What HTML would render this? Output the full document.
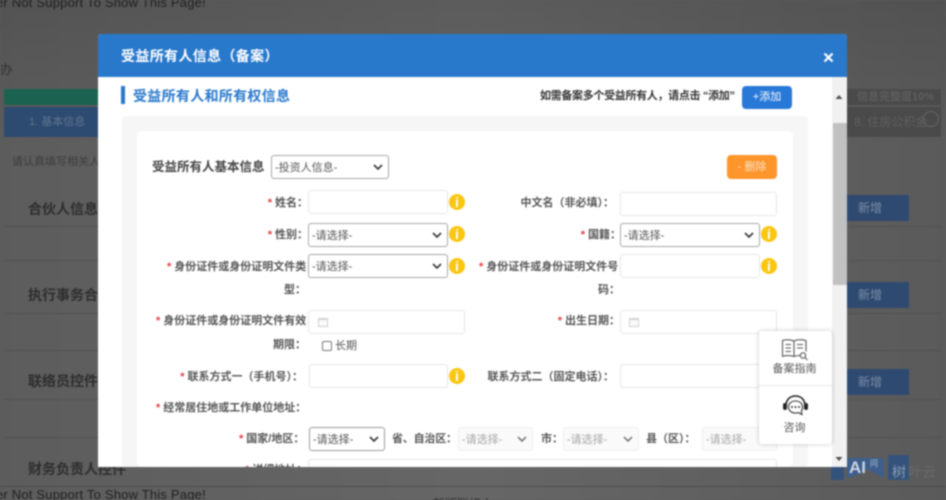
<!DOCTYPE html>
<html lang="zh-CN"><head><meta charset="utf-8"><title>受益所有人信息</title>
<style>
*{box-sizing:border-box}
html,body{margin:0;padding:0;width:946px;height:500px;overflow:hidden}
body{position:relative;font-family:"Liberation Sans","Noto Sans CJK SC",sans-serif;background:#5e5e5e}
#wrap{position:absolute;left:0;top:0;width:946px;height:500px;filter:blur(.7px);overflow:hidden;background:linear-gradient(180deg,rgba(0,0,0,.1) 0,rgba(0,0,0,0) 30%),linear-gradient(90deg,#5c5c5c 0,#666 50%,#5a5a5a 100%)}
.a{position:absolute;white-space:nowrap}
.bg{color:#2c2c2c}
.h{font-weight:700;font-size:14px;color:#2e2e2e;line-height:20px}
.line{position:absolute;height:1px;background:#525252}
.new{position:absolute;left:847px;width:62px;height:26px;background:#2f4a70;color:#7b8ea8;font-size:12px;line-height:26px;padding-left:11px}
#modal{position:absolute;left:98px;top:34px;width:749px;height:433px;background:#fff;border-radius:3px 3px 0 0;overflow:hidden}
#head{position:absolute;left:0;top:0;width:749px;height:43px;background:#2878cc;color:#fff;font-size:14px;font-weight:700;line-height:45px;padding-left:23px;letter-spacing:.35px}
.lb{position:absolute;font-size:11px;font-weight:700;color:#555;line-height:17px;white-space:nowrap;text-align:right}
.lb i{font-style:normal;color:#e23a3a;margin-right:3px}
.ip{position:absolute;height:24px;background:#fff;border:1px solid #e6e6e6;border-radius:3px}
.sel{position:absolute;height:24px;background:#fff;border:1px solid #a5a5a5;border-radius:3px;font-size:11px;color:#555;line-height:24px;padding-left:3px;white-space:nowrap}
.sel svg,.dis svg{position:absolute;right:5px;top:8px}
.dis{position:absolute;height:24px;background:#fafafa;border:1px solid #eee;border-radius:3px;font-size:11px;color:#a6a6a6;line-height:24px;padding-left:3px;white-space:nowrap}
.inf{position:absolute;width:16px;height:16px;border-radius:50%;background:#fbc60f;color:#fff;font:700 14px/16px "Liberation Sans",sans-serif;text-align:center}
.cal{position:absolute;width:10px;height:9px;border:1px solid #d0d0d0;border-top-width:2px;background:#fafafa}
</style></head>
<body><div id="wrap">
<div class="a bg" style="left:-4px;top:-5px;font-size:13px;color:#1f1f1f;letter-spacing:.2px">er Not Support To Show This Page!</div>
<div class="a bg" style="left:0;top:59px;font-size:13px;color:#333">办</div>
<div class="a" style="left:4px;top:89px;width:94px;height:16px;background:#1c6250"></div>
<div class="a" style="left:4px;top:107px;width:94px;height:30px;background:#2d4a70;color:#5d7590;font-size:11px;line-height:30px;padding-left:25px">1. 基本信息</div>
<div class="a" style="left:12px;top:153px;font-size:11px;color:#3d3d3d">请认真填写相关人</div>
<div class="a h" style="left:28px;top:199px">合伙人信息</div>
<div class="a h" style="left:28px;top:285px">执行事务合</div>
<div class="a h" style="left:28px;top:371px">联络员控件</div>
<div class="a h" style="left:28px;top:459px">财务负责人控件</div>
<div class="line" style="left:4px;top:226px;width:94px"></div><div class="line" style="left:4px;top:260px;width:94px"></div>
<div class="line" style="left:4px;top:313px;width:94px"></div><div class="line" style="left:4px;top:350px;width:94px"></div>
<div class="line" style="left:4px;top:399px;width:94px"></div><div class="line" style="left:4px;top:437px;width:94px"></div>
<div class="line" style="left:847px;top:226px;width:95px"></div><div class="line" style="left:847px;top:260px;width:95px"></div>
<div class="line" style="left:847px;top:313px;width:95px"></div><div class="line" style="left:847px;top:350px;width:95px"></div>
<div class="line" style="left:847px;top:399px;width:95px"></div><div class="line" style="left:847px;top:437px;width:95px"></div>
<div class="line" style="left:0;top:486px;width:946px;background:#4d4d4d"></div>
<div class="a" style="left:847px;top:89px;width:94px;height:16px;background:#4a4a4a;color:#5e5e5e;font-size:11px;font-weight:700;line-height:16px;padding-left:10px">信息完整度10%</div>
<div class="a" style="left:847px;top:107px;width:94px;height:30px;background:#4a4a4a;color:#5f5f5f;font-size:12px;line-height:30px;padding-left:7px">8. 住房公积金</div>
<div class="a" style="left:923px;top:111px;width:16px;height:16px;border:1px solid #666;border-radius:50%"></div>
<div class="new" style="top:195px">新增</div>
<div class="new" style="top:282px">新增</div>
<div class="new" style="top:369px">新增</div>
<div class="a" style="left:831px;top:467px;width:13px;height:13px;background:#34537c"></div>
<div class="a" style="left:847px;top:458px;width:37px;height:20px;background:#3e5f8c;clip-path:polygon(0 0,100% 0,100% 100%,72% 72%,55% 55%,35% 80%,0 100%)"></div>
<div class="a" style="left:849px;top:458px;color:#ccd5e1;font:700 17px/20px 'Liberation Sans',sans-serif">AI</div>
<div class="a" style="left:870px;top:459px;color:#b9c5d5;font-size:8px;line-height:9px">问</div>
<div class="a" style="left:888px;top:455px;width:21px;height:25px;background:#34537c"></div>
<div class="a" style="left:892px;top:463px;font-size:14px;line-height:18px;color:#8a9bb0">树</div>
<div class="a" style="left:908px;top:463px;font-size:14px;line-height:18px;color:#6a6a6a">叶云</div>
<div class="a" style="left:433px;top:497px;font-size:12px;color:#2c2c2c;line-height:14px">新版联络人</div>

<div id="modal">
 <div id="head">受益所有人信息（备案）</div>
 <svg style="position:absolute;left:725px;top:18px" width="11" height="11" viewBox="0 0 11 11"><path d="M1.5 1.5l8 8M9.5 1.5l-8 8" stroke="#fff" stroke-width="2.2"/></svg>
 <div style="position:absolute;left:734px;top:43px;width:15px;height:390px;background:#f1f1f1"></div>
 <div style="position:absolute;left:735px;top:89px;width:14px;height:162px;background:#c1c1c1"></div>
 <svg style="position:absolute;left:736px;top:60px" width="10" height="6"><path d="M1.5 5h7L5 1z" fill="#505050"/></svg>
 <svg style="position:absolute;left:736px;top:422px" width="10" height="6"><path d="M1.5 1h7L5 5z" fill="#505050"/></svg>

 <div style="position:absolute;left:23px;top:52px;width:4px;height:18px;background:#2878cc"></div>
 <div class="a" style="left:35px;top:52px;font-size:14px;font-weight:700;color:#2878cc;line-height:20px;letter-spacing:.3px">受益所有人和所有权信息</div>
 <div class="a" style="left:442px;top:54px;font-size:11px;font-weight:700;color:#333;line-height:16px;letter-spacing:-.32px">如需备案多个受益所有人，请点击 “添加”</div>
 <div class="a" style="left:644px;top:52px;width:50px;height:23px;background:#2878d8;border-radius:4px;color:#fff;font-size:11px;line-height:23px;text-align:center">+添加</div>

 <div style="position:absolute;left:24px;top:82px;width:686px;height:351px;background:#f6f6f6;border-radius:4px"></div>
 <div style="position:absolute;left:39px;top:97px;width:656px;height:336px;background:#fff;border-radius:5px"></div>

 <div class="a" style="left:54px;top:124px;font-size:12.5px;font-weight:700;color:#444;line-height:18px">受益所有人基本信息</div>
 <div class="sel" style="left:173px;top:121px;width:118px">-投资人信息-<svg width="10" height="6"><path d="M1 1l4 4 4-4" fill="none" stroke="#333" stroke-width="1.6"/></svg></div>
 <div class="a" style="left:629px;top:121px;width:50px;height:24px;background:#fd952a;border-radius:4px;color:#fbe3c8;font-size:11px;line-height:24px;text-align:center">- 删除</div>

 <div class="lb" style="right:539px;top:161px"><i>*</i>姓名：</div>
 <div class="ip" style="left:210px;top:156px;width:140px"></div><div class="inf" style="left:351px;top:160px">i</div>
 <div class="lb" style="right:233px;top:161px">中文名（非必填）：</div>
 <div class="ip" style="left:522px;top:158px;width:157px"></div>

 <div class="lb" style="right:539px;top:193px"><i>*</i>性别：</div>
 <div class="sel" style="left:210px;top:189px;width:140px">-请选择-<svg width="10" height="6"><path d="M1 1l4 4 4-4" fill="none" stroke="#333" stroke-width="1.6"/></svg></div><div class="inf" style="left:351px;top:192px">i</div>
 <div class="lb" style="right:226px;top:193px"><i>*</i>国籍：</div>
 <div class="sel" style="left:522px;top:189px;width:140px">-请选择-<svg width="10" height="6"><path d="M1 1l4 4 4-4" fill="none" stroke="#333" stroke-width="1.6"/></svg></div><div class="inf" style="left:663px;top:192px">i</div>

 <div class="lb" style="left:69px;top:225px"><i>*</i>身份证件或身份证明文件类</div>
 <div class="lb" style="right:541px;top:248px">型：</div>
 <div class="sel" style="left:210px;top:220px;width:140px">-请选择-<svg width="10" height="6"><path d="M1 1l4 4 4-4" fill="none" stroke="#333" stroke-width="1.6"/></svg></div><div class="inf" style="left:351px;top:224px">i</div>
 <div class="lb" style="left:381px;top:225px"><i>*</i>身份证件或身份证明文件号</div>
 <div class="lb" style="right:227px;top:248px">码：</div>
 <div class="ip" style="left:522px;top:220px;width:140px"></div><div class="inf" style="left:663px;top:224px">i</div>

 <div class="lb" style="left:58px;top:279px"><i>*</i>身份证件或身份证明文件有效</div>
 <div class="lb" style="right:541px;top:303px">期限：</div>
 <div class="ip" style="left:210px;top:276px;width:157px"></div><div class="cal" style="left:220px;top:284px"></div>
 <div class="a" style="left:224px;top:307px;width:10px;height:10px;border:1px solid #777;border-radius:2px;background:#fff"></div>
 <div class="a" style="left:237px;top:304px;font-size:11px;color:#555;line-height:16px">长期</div>
 <div class="lb" style="right:227px;top:279px"><i>*</i>出生日期：</div>
 <div class="ip" style="left:522px;top:276px;width:157px"></div><div class="cal" style="left:531px;top:284px"></div>

 <div class="lb" style="right:544px;top:335px"><i>*</i>联系方式一（手机号）：</div>
 <div class="ip" style="left:211px;top:330px;width:139px"></div><div class="inf" style="left:351px;top:334px">i</div>
 <div class="lb" style="right:233px;top:335px">联系方式二（固定电话）：</div>
 <div class="ip" style="left:522px;top:330px;width:157px"></div>

 <div class="lb" style="left:58px;top:366px"><i>*</i>经常居住地或工作单位地址：</div>

 <div class="lb" style="left:141px;top:397px"><i>*</i>国家/地区：</div>
 <div class="sel" style="left:211px;top:393px;width:76px;border-color:#999">-请选择-<svg width="10" height="6"><path d="M1 1l4 4 4-4" fill="none" stroke="#333" stroke-width="1.6"/></svg></div>
 <div class="lb" style="left:294px;top:397px;letter-spacing:-.2px">省、自治区：</div>
 <div class="dis" style="left:360px;top:393px;width:75px">-请选择-<svg width="10" height="6"><path d="M1 1l4 4 4-4" fill="none" stroke="#666" stroke-width="1.4"/></svg></div>
 <div class="lb" style="left:443px;top:397px">市：</div>
 <div class="dis" style="left:465px;top:393px;width:76px">-请选择-<svg width="10" height="6"><path d="M1 1l4 4 4-4" fill="none" stroke="#666" stroke-width="1.4"/></svg></div>
 <div class="lb" style="left:548px;top:397px">县（区）：</div>
 <div class="dis" style="left:604px;top:393px;width:75px">-请选择-</div>
 <div class="lb" style="left:147px;top:428px"><i>*</i>详细地址：</div>
 <div class="ip" style="left:210px;top:425px;width:469px"></div>
</div>

<div class="a" style="left:759px;top:331px;width:73px;height:113px;background:#fff;border-radius:3px;box-shadow:0 0 5px rgba(0,0,0,.22)">
 <svg style="position:absolute;left:22px;top:7px" width="28" height="23" viewBox="0 0 28 23" fill="none" stroke="#555" stroke-width="1.1"><path d="M1.5 2.5C5 1.5 10 1.5 13 3v15.5c-3-1.2-8-1.2-11.5-.2z"/><path d="M13 3c3-1.5 8-1.5 12-.5v11M13 18.5c2-.8 4-1 6-1"/><path d="M4.500 6.500h5.500M4.500 10h5.500M4.500 13.500h5.500M16 6.500h6M16 10h6"/><circle cx="22" cy="17.500" r="2.700"/><path d="M24 19.500l2.500 2.500"/></svg>
 <div class="a" style="left:-1px;width:73px;text-align:center;top:30px;font-size:11px;color:#555;line-height:16px">备案指南</div>
 <div style="position:absolute;left:0;top:54px;width:73px;height:1px;background:#e6e6e6"></div>
 <svg style="position:absolute;left:23px;top:63px" width="27" height="24" viewBox="0 0 27 24" fill="none"><path d="M4 12C4 5.500 8 2 13.500 2S23 5.500 23 12" stroke="#222" stroke-width="1.600"/><rect x="1" y="9" width="4" height="7" rx="2" fill="#222"/><rect x="22" y="9" width="4" height="7" rx="2" fill="#222"/><path d="M13.500 6c-4.500 0-7 2.800-7 6s2.500 6 7 6c1 0 2-.1 2.800-.4L20 19.500l-.6-3.500c.8-1 1.100-2.400 1.100-4 0-3.200-2.500-6-7-6z" stroke="#333" stroke-width="1.100" transform="translate(0 1)"/><circle cx="10" cy="13" r="1" fill="#333"/><circle cx="13.500" cy="13" r="1" fill="#333"/><circle cx="17" cy="13" r="1" fill="#333"/></svg>
 <div class="a" style="left:-1px;width:73px;text-align:center;top:89px;font-size:11px;color:#555;line-height:16px">咨询</div>
</div>
<div class="a" style="left:-4px;top:487px;font-size:13px;color:#1f1f1f;letter-spacing:.2px;line-height:16px">er Not Support To Show This Page!</div>
</div></body></html>
